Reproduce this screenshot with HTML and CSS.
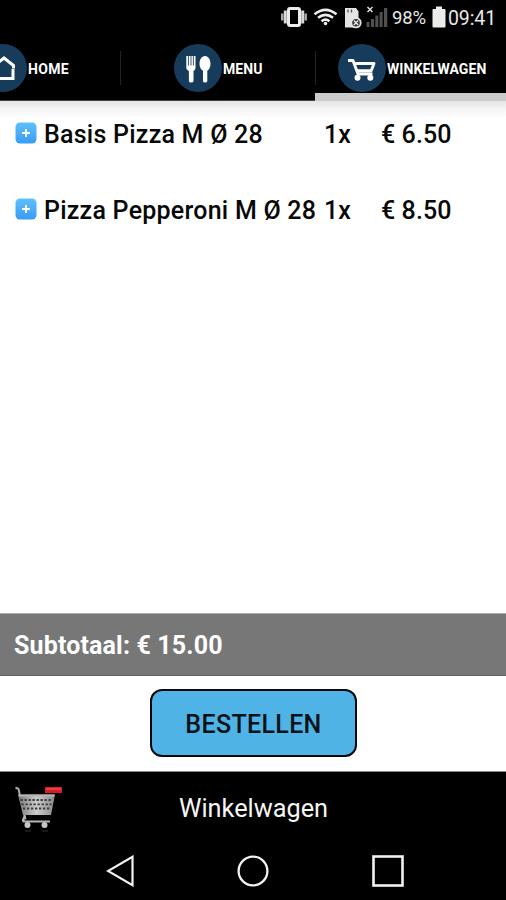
FILE: index.html
```html
<!DOCTYPE html>
<html lang="nl">
<head>
<meta charset="utf-8">
<meta name="viewport" content="width=device-width, initial-scale=1">
<title>Winkelwagen</title>
<link rel="stylesheet" href="styles.css">
</head>
<body>
<div class="app">
  <header class="status">
    <svg class="status-icons" width="108" height="24" viewBox="280 5 108 24" aria-hidden="true">
      <rect x="288.500" y="8.500" width="11" height="17" rx="1.500" fill="none" stroke="#ececec" stroke-width="3"/>
      <path d="M285.300 10.500v13M302.700 10.500v13" stroke="#d8d8d8" stroke-width="3"/>
      <path d="M282.300 13.500v7M305.700 13.500v7" stroke="#aaa" stroke-width="2.500"/>
      <g fill="none" stroke="#ececec" stroke-width="2.600">
        <path d="M314.500 14.200Q325.500 5.500 336.500 14.200"/>
        <path d="M318 17.800Q325.500 11.800 333 17.800"/>
        <path d="M321.500 21.200Q325.500 18 329.500 21.200"/>
      </g>
      <circle cx="325.500" cy="23.500" r="1.800" fill="#ececec"/>
      <path d="M345 8h11l2.500 3.500v16H345z" fill="#e4e4e4"/>
      <path d="M348 9.500v3M351.500 9.500v3" stroke="#555" stroke-width="1.300"/>
      <circle cx="356" cy="22.700" r="4.700" fill="#333" stroke="#e4e4e4" stroke-width="1.800"/>
      <path d="m353.800 20.500 4.400 4.400m0-4.400-4.400 4.400" stroke="#e4e4e4" stroke-width="1.400"/>
      <path d="m367.500 7 5 5m0-5-5 5" stroke="#ddd" stroke-width="1.500"/>
      <path d="M366.500 22h3v5h-3zM371 19h3v8h-3zM375.300 15.500h3V27h-3zM379.600 12h3v15h-3zM384 8h3.300v19H384z" fill="#505050"/>
    </svg>
    <span class="percent">98%</span>
    <svg class="battery" width="14" height="22" viewBox="0 0 14 22" aria-hidden="true"><path d="M4 .5h6V3h2.500q1 0 1 1v16.500q0 1-1 1h-11q-1 0-1-1V4q0-1 1-1H4z" fill="#ececec"/></svg>
    <span class="clock">09:41</span>
  </header>

  <nav class="tabs">
    <a class="tab tab-home">
      <svg class="disc" viewBox="0 0 48 48" aria-hidden="true"><circle cx="24" cy="24" r="24" fill="#173c5b"/><path d="m12.500 23.500 12.500-9.500 9.500 7.500v3M15 22v12.500h19V25" fill="none" stroke="#fff" stroke-width="3"/></svg>
      <span>HOME</span>
    </a>
    <a class="tab tab-menu">
      <svg class="disc" viewBox="0 0 48 48" aria-hidden="true"><circle cx="24" cy="24" r="24" fill="#173c5b"/><path d="M12.300 12h9.200v12q0 2-2 3v10q0 1.500-2.300 1.500t-2.300-1.500V27q-2.600-1-2.600-3z" fill="#fff"/><path d="M14.500 12v9.500M17 12v9.500M19.400 12v9.500" stroke="#4d6880" stroke-width="1.100"/><path d="M31 12c3.500 0 5.500 3.800 5.500 8 0 3.500-1.500 5.500-3.200 6.800V37q0 1.500-2.200 1.500T29 37V26.800c-2-1.300-3.500-3.300-3.500-6.800 0-4.200 2-8 5.500-8z" fill="#fff"/></svg>
      <span>MENU</span>
    </a>
    <a class="tab tab-cart">
      <svg class="disc" viewBox="0 0 48 48" aria-hidden="true"><circle cx="24" cy="24" r="24" fill="#173c5b"/><path d="M10 16.500h5l5 13.500h14.500M16.500 19.500h19.500l-2.800 7.300H19" fill="none" stroke="#fff" stroke-width="2.900" stroke-linejoin="round"/><circle cx="19.500" cy="33.700" r="3" fill="#fff"/><circle cx="32.300" cy="33.700" r="3" fill="#fff"/></svg>
      <span>WINKELWAGEN</span>
    </a>
  </nav>

  <main class="cart">
    <div class="item">
      <svg class="add" viewBox="0 0 22 22" aria-hidden="true"><use href="#plus"/></svg>
      <span class="name">Basis Pizza M Ø 28</span><span class="qty">1x</span><span class="price">€ 6.50</span>
    </div>
    <div class="item">
      <svg class="add" viewBox="0 0 22 22" aria-hidden="true">
        <defs>
          <linearGradient id="blue" x2="0" y2="1"><stop stop-color="#60c0fb"/><stop offset="1" stop-color="#399bf5"/></linearGradient>
          <g id="plus"><rect x=".5" y=".5" width="21" height="21" rx="4.500" fill="url(#blue)"/><path d="M11 7v8M7 11h8" stroke="#fff" stroke-width="1.800"/></g>
        </defs>
        <use href="#plus"/>
      </svg>
      <span class="name">Pizza Pepperoni M Ø 28</span><span class="qty">1x</span><span class="price">€ 8.50</span>
    </div>
  </main>

  <section class="subtotal">Subtotaal: € 15.00</section>
  <section class="checkout"><button class="order">BESTELLEN</button></section>

  <footer class="titlebar">
    <svg class="trolley" width="50" height="50" viewBox="14 782 50 50" aria-hidden="true">
      <defs><linearGradient id="steel" x2="1"><stop stop-color="#777"/><stop offset=".5" stop-color="#ccc"/><stop offset="1" stop-color="#888"/></linearGradient></defs>
      <path d="M15.500 786.500l3 1.500 7 30.500" fill="none" stroke="#aaa" stroke-width="2"/>
      <path d="M18 793.500h37l-4 20.500H23z" fill="url(#steel)"/>
      <path d="M20.500 799h31.500M21.500 803.300h30M23 807.500h27.500" stroke="#3c3c3c" stroke-width="1.800" stroke-dasharray="2.300 1.700"/>
      <path d="M18.500 794.500h36M25 814.500l-2 4.500q0 1.500 2 1.500h25" fill="none" stroke="#b5b5b5" stroke-width="2.200"/>
      <circle cx="27.500" cy="824" r="3" fill="#c5c5c5"/><circle cx="44.500" cy="824" r="3" fill="#c5c5c5"/>
      <path d="M25 830h6M42 830h6" stroke="#222" stroke-width="1.500"/>
      <rect x="45" y="786" width="17" height="6" fill="#d91d27"/><path d="M46 788h15" stroke="#f04a50" stroke-width="1.500"/>
    </svg>
    <h1>Winkelwagen</h1>
  </footer>
  <nav class="system">
    <svg width="28" height="32" viewBox="0 0 28 32" aria-label="Terug"><path d="M26.500 1.800v28.400L2 16z" fill="none" stroke="#f2f2f2" stroke-width="2.200"/></svg>
    <svg width="32" height="32" viewBox="0 0 32 32" aria-label="Start"><circle cx="16" cy="16" r="14.400" fill="none" stroke="#f2f2f2" stroke-width="2.300"/></svg>
    <svg width="32" height="32" viewBox="0 0 32 32" aria-label="Recent"><rect x="1.500" y="1.500" width="29" height="29" fill="none" stroke="#f2f2f2" stroke-width="2.600"/></svg>
  </nav>
</div>
</body>
</html>
```
FILE: styles.css
```css
* { box-sizing: border-box; }
body { margin: 0; background: #fff; color: #080808; font-family: Roboto, "Liberation Sans", sans-serif; }
.app { width: 506px; height: 900px; display: flex; flex-direction: column; overflow: hidden; }
svg { display: block; flex: none; }
.status { height: 36px; flex: none; background: #000; color: #e8e8e8; display: flex; align-items: center; padding: 0 0 2px 280px; font-size: 18.5px; white-space: nowrap; }
.percent { width: 38px; margin-left: 4px; padding-top: 2px; letter-spacing: -0.1px; }
.battery { margin-left: 2px; }
.clock { margin-left: 2px; padding-top: 2px; font-size: 19.5px; letter-spacing: -0.1px; }
.tabs { height: 65px; flex: none; background: #000; display: flex; }
.tab { height: 65px; display: flex; align-items: center; color: #fff; font-weight: 700; font-size: 14px; white-space: nowrap; border-bottom: 1px solid #444; letter-spacing: 0.1px; }
.tab span { margin-left: 1px; padding-top: 2px; }
.disc { width: 48px; height: 48px; }
.tab-home { width: 120px; letter-spacing: 0.3px; }
.tab-home .disc { margin-left: -21px; }
.tab-menu { width: 195px; padding-left: 54px; background: linear-gradient(#242424, #242424) 0 15px / 1px 34px no-repeat; }
.tab-cart { width: 191px; padding-left: 23px; border-bottom: 8px solid #cbcbcb; background: linear-gradient(#242424, #242424) 0 15px / 1px 34px no-repeat; }
.tab-cart .disc, .tab-cart span { position: relative; top: 3.5px; }
.cart { flex: 1; background: linear-gradient(#e4e4e4, #f5f5f5 8px, #fff 17px); padding-top: 10px; }
.item { height: 76px; display: flex; align-items: flex-start; padding-left: 15px; font-size: 25px; line-height: 48px; font-weight: 500; white-space: nowrap; }
.add { width: 22px; height: 22px; margin: 10.5px 7px 0 0; }
.name { width: 280px; letter-spacing: 0.24px; }
.qty { width: 57px; }
.price { letter-spacing: 0.1px; }
.subtotal { height: 63px; flex: none; background: #777; color: #fff; border-top: 1px solid #aaa; border-bottom: 1px solid #606060; padding-left: 14px; font-size: 25px; font-weight: 700; line-height: 64px; letter-spacing: 0.15px; }
.checkout { height: 96px; flex: none; background: #fff; border-bottom: 1px solid #888; padding: 13px 0 0 150px; }
.order { display: block; width: 207px; height: 68px; padding: 2px 0 0; border: 2px solid #05090b; border-radius: 12px; background: #50b3e6; color: #071118; font: 500 25px Roboto, sans-serif; letter-spacing: 0.35px; }
.titlebar { height: 71px; flex: none; background: #000; display: flex; align-items: center; padding-left: 14px; color: #f5f5f5; }
.titlebar h1 { margin: 0 0 0 115px; padding-top: 1px; font-size: 25.3px; font-weight: 400; }
.system { height: 57px; flex: none; background: #000; display: flex; padding: 12px 102px 0 106px; justify-content: space-between; }
```
